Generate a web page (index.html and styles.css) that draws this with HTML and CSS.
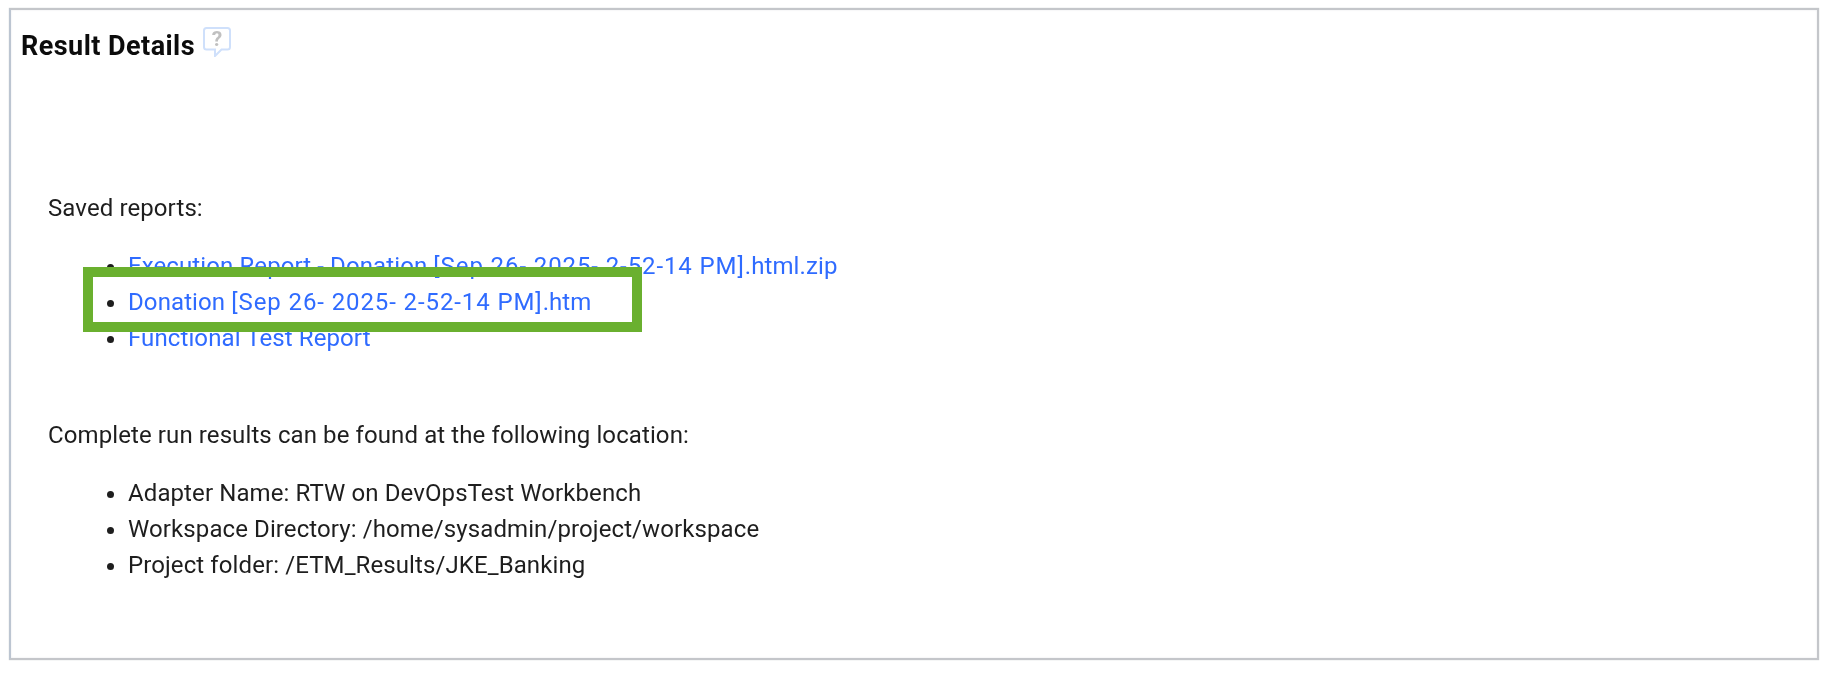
FILE: index.html
```html
<!DOCTYPE html>
<html lang="en">
<head>
<meta charset="utf-8">
<title>Result Details</title>
<link rel="stylesheet" href="styles.css">
</head>
<body>
<main class="panel">
  <header class="panel-head">
    <h2 class="panel-title">Result Details</h2>
    <svg class="help-icon" width="28" height="30" viewBox="0 0 28 30" aria-hidden="true">
      <path d="M3.500 1H24.500Q27 1 27 3.500V20Q27 22.500 24.500 22.500H18.500L12 29V22.500H3.500Q1 22.500 1 20V3.500Q1 1 3.500 1Z" fill="#fff" stroke="#cfe0fb" stroke-width="2"/>
      <text x="14" y="18.500" text-anchor="middle" class="help-mark">?</text>
    </svg>
  </header>
  <section class="panel-body">
    <p class="lead">Saved reports:</p>
    <ul class="items">
      <li><a href="#">Execution Report - Donation <span class="stamp">[Sep 26- 2025- 2-52-14 PM]</span>.html.zip</a></li>
      <li><a href="#">Donation <span class="stamp">[Sep 26- 2025- 2-52-14 PM]</span>.htm</a></li>
      <li><a href="#">Functional Test Report</a></li>
    </ul>
    <p class="lead lead-second">Complete run results can be found at the following location:</p>
    <ul class="items">
      <li>Adapter Name: RTW on DevOpsTest Workbench</li>
      <li>Workspace Directory: /home/sysadmin/project/workspace</li>
      <li>Project folder: /ETM_Results/JKE_Banking</li>
    </ul>
  </section>
  <div class="highlight"></div>
</main>
</body>
</html>
```
FILE: styles.css
```css
html, body { margin: 0; padding: 0; background: #fff; }
body { height: 674px; overflow: hidden; font-family: Roboto, "Liberation Sans", sans-serif; color: #1e1e1e; }
.panel { position: relative; box-sizing: border-box; margin: 8px 0 0 9px; width: 1810px; height: 652px; border: 2px solid #c4c6ca; border-left-color: #bcc5d1; padding: 0 10px; box-shadow: 0 0 1px rgba(150, 155, 160, 0.5), inset 0 0 2px rgba(190, 195, 200, 0.4); }
.panel-head { display: flex; align-items: flex-start; height: 56px; padding-top: 18px; filter: blur(0.5px); }
.panel-title { margin: 0; font-size: 27px; line-height: 36px; font-weight: 700; letter-spacing: 0.45px; color: #0c0c0c; }
.help-icon { margin: -1px 0 0 8px; flex: none; }
.help-mark { font-size: 21px; font-weight: 700; fill: #c0c0c0; font-family: Roboto, sans-serif; }
.panel-body { padding: 106px 0 0 27px; font-size: 24px; line-height: 36px; letter-spacing: 0.1px; }
.lead { margin: 0; filter: blur(0.5px); }
.lead-second { margin-top: 61px; }
.items { margin: 22px 0 0; padding: 0 0 0 80px; list-style: disc; filter: blur(0.5px); }
.items li { height: 36px; }
.items a { color: #2f6bff; text-decoration: none; }
.stamp { letter-spacing: 0.9px; }
.highlight { position: absolute; left: 72px; top: 257px; width: 559px; height: 65px; box-sizing: border-box; border: 10px solid #6ab02f; pointer-events: none; }
```
